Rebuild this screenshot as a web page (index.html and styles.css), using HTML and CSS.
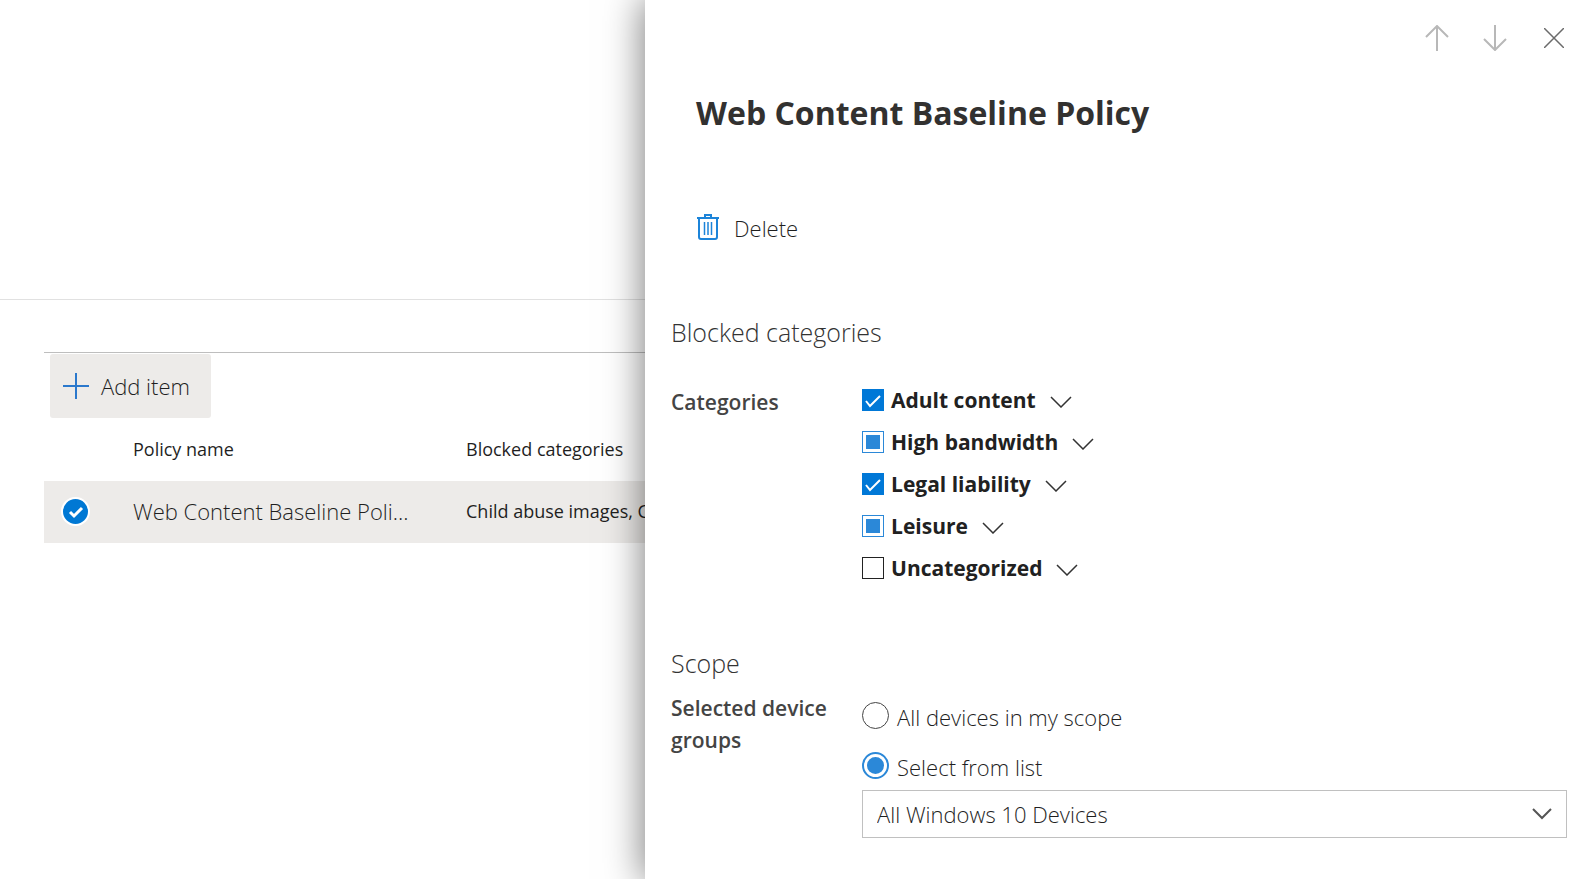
FILE: index.html
```html
<!DOCTYPE html>
<html lang="en">
<head>
    <meta charset="utf-8">
    <title>Web content filtering</title>
    <link rel="stylesheet" href="styles.css">
</head>
<body>
    <main class="page">
        <header class="page-header"></header>
        <section class="policies">
            <div class="toolbar">
                <button type="button" class="add-button">
                    <svg width="26" height="26" viewBox="0 0 26 26" fill="none" stroke="#2b78cc" stroke-width="2"><path d="M0 13h26M13 0v26"/></svg>
                    Add item
                </button>
            </div>
            <table class="policy-table">
                <colgroup>
                    <col class="col-check">
                    <col class="col-name">
                    <col>
                </colgroup>
                <thead>
                    <tr>
                        <td></td>
                        <th scope="col">Policy name</th>
                        <th scope="col">Blocked categories</th>
                    </tr>
                </thead>
                <tbody>
                    <tr class="selected">
                        <td><input type="checkbox" class="row-check" aria-label="Select policy" checked></td>
                        <td class="policy-name">Web Content Baseline Poli...</td>
                        <td>Child abuse images, Cults</td>
                    </tr>
                </tbody>
            </table>
        </section>
    </main>

    <aside class="panel">
        <div class="panel-nav">
            <button type="button" aria-label="Previous" class="nav-button">
                <svg width="26" height="26" viewBox="0 0 26 26" fill="none" stroke="#b8b8b8" stroke-width="2"><path d="M12 26V1M1 12L12 1l11 11"/></svg>
            </button>
            <button type="button" aria-label="Next" class="nav-button">
                <svg width="26" height="26" viewBox="0 0 26 26" fill="none" stroke="#b8b8b8" stroke-width="2"><path d="M12 0v25M1 14l11 11 11-11"/></svg>
            </button>
            <button type="button" aria-label="Close" class="nav-button">
                <svg width="20" height="20" viewBox="0 0 20 20" fill="none" stroke="#6b6b6b" stroke-width="1.5"><path d="M0 0l20 20M20 0L0 20"/></svg>
            </button>
        </div>

        <h1>Web Content Baseline Policy</h1>

        <button type="button" class="delete-button">
            <svg width="22" height="28" viewBox="0 0 22 28" fill="none" stroke="#1c84d9" stroke-width="2"><path d="M0 4h22M8 4V1h6v3M2 4v19q0 2 2 2h14q2 0 2-2V4"/><path d="M7.5 8v13M11 8v13M14.5 8v13" stroke-width="1.5"/></svg>
            Delete
        </button>

        <section class="group">
            <h2>Blocked categories</h2>
            <div class="field categories">
                <div class="field-label" id="categories-label">Categories</div>
                <ul class="category-list" aria-labelledby="categories-label">
                    <li>
                        <label><input type="checkbox" checked>Adult content</label>
                        <button type="button" class="expand" aria-label="Expand Adult content"><svg width="22" height="12" viewBox="0 0 22 12"><path d="M1 1l10 10L21 1"/></svg></button>
                    </li>
                    <li>
                        <label><input type="checkbox" class="partial">High bandwidth</label>
                        <button type="button" class="expand" aria-label="Expand High bandwidth"><svg width="22" height="12" viewBox="0 0 22 12"><path d="M1 1l10 10L21 1"/></svg></button>
                    </li>
                    <li>
                        <label><input type="checkbox" checked>Legal liability</label>
                        <button type="button" class="expand" aria-label="Expand Legal liability"><svg width="22" height="12" viewBox="0 0 22 12"><path d="M1 1l10 10L21 1"/></svg></button>
                    </li>
                    <li>
                        <label><input type="checkbox" class="partial">Leisure</label>
                        <button type="button" class="expand" aria-label="Expand Leisure"><svg width="22" height="12" viewBox="0 0 22 12"><path d="M1 1l10 10L21 1"/></svg></button>
                    </li>
                    <li>
                        <label><input type="checkbox">Uncategorized</label>
                        <button type="button" class="expand" aria-label="Expand Uncategorized"><svg width="22" height="12" viewBox="0 0 22 12"><path d="M1 1l10 10L21 1"/></svg></button>
                    </li>
                </ul>
            </div>
        </section>

        <section class="group">
            <h2>Scope</h2>
            <div class="field scope">
                <div class="field-label" id="groups-label">Selected device groups</div>
                <div class="scope-options" role="group" aria-labelledby="groups-label">
                    <label><input type="radio" name="scope"><span>All devices in my scope</span></label>
                    <label><input type="radio" name="scope" checked><span>Select from list</span></label>
                    <select aria-labelledby="groups-label">
                        <option>All Windows 10 Devices</option>
                    </select>
                </div>
            </div>
        </section>
    </aside>

    <script>
        document.querySelectorAll(".partial").forEach(function(box) {
            box.indeterminate = true;
        });
    </script>
</body>
</html>
```

FILE: styles.css
```css
* {
    box-sizing: border-box;
}
body {
    margin: 0;
    min-height: 100vh;
    position: relative;
    overflow: hidden;
    background-color: #fff;
    color: #1f1f1f;
    font-family: "Segoe UI", "Open Sans", "Noto Sans", sans-serif;
    font-size: 22px;
    font-weight: 300;
}
button {
    border: none;
    background: none;
    color: inherit;
    font: inherit;
    cursor: pointer;
}
input {
    appearance: none;
    margin: 0;
    flex-shrink: 0;
}
.page-header {
    height: 300px;
    border-bottom: 1px solid #e1e1e1;
}
.policies {
    margin: 52px 0 0 44px;
    border-top: 1px solid #bebebe;
}
.toolbar {
    padding: 1px 6px 0;
}
.add-button {
    display: flex;
    align-items: center;
    gap: 12px;
    height: 64px;
    padding: 0 21px 0 13px;
    border-radius: 3px;
    background-color: #edebe9;
}
.policy-table {
    width: 100%;
    table-layout: fixed;
    border-collapse: collapse;
    font-size: 18px;
}
.col-check {
    width: 89px;
}
.col-name {
    width: 333px;
}
.policy-table th,
.policy-table td {
    height: 62px;
    padding: 0 0 2px;
    text-align: left;
    font-weight: 400;
}
.policy-table th {
    height: 63px;
}
.policy-table .policy-name {
    font-size: 22px;
    font-weight: 300;
}
.selected {
    background-color: #edebe9;
}
.row-check {
    display: block;
    width: 29px;
    height: 29px;
    margin-left: 17px;
    border: 2px solid #fff;
    border-radius: 50%;
    background: #0078d4 url("data:image/svg+xml,%3Csvg xmlns='http://www.w3.org/2000/svg' viewBox='0 0 25 25'%3E%3Cpath d='M7 13l4 4 8-8' fill='none' stroke='white' stroke-width='3'/%3E%3C/svg%3E") center / 25px no-repeat;
}
.panel {
    position: absolute;
    top: 0;
    right: 0;
    bottom: 0;
    width: 59.15%;
    padding: 13px 0 0 26px;
    background-color: #fff;
    box-shadow: 0 0 36px 2px rgba(0, 0, 0, 0.5);
}
.panel-nav {
    display: flex;
    justify-content: flex-end;
    gap: 8px;
}
.nav-button {
    display: flex;
    align-items: center;
    justify-content: center;
    width: 50px;
    height: 50px;
    padding: 0;
}
h1 {
    margin: 26px 0 0 25px;
    color: #323130;
    font-size: 32px;
    font-weight: 700;
    line-height: 48px;
}
.delete-button {
    display: flex;
    align-items: center;
    gap: 15px;
    height: 50px;
    margin: 66px 0 0 26px;
    padding: 0;
}
.group {
    margin-top: 59px;
    padding-right: 12px;
}
.group + .group {
    margin-top: 54px;
}
h2 {
    margin: 0;
    color: #333;
    font-size: 25px;
    font-weight: 300;
    line-height: 40px;
}
.field {
    display: flex;
}
.categories {
    margin-top: 27px;
}
.scope {
    margin-top: 7px;
}
.field-label {
    width: 191px;
    padding: 2px 20px 0 0;
    color: #444;
    font-size: 21px;
    font-weight: 600;
    line-height: 32px;
}
.categories .field-label {
    line-height: 42px;
}
.category-list {
    margin: 0;
    padding: 0;
    list-style: none;
    color: #212121;
    font-size: 21px;
    font-weight: 700;
}
.category-list li,
.category-list label {
    display: flex;
    align-items: center;
    height: 42px;
    gap: 7px;
}
.category-list li {
    gap: 14px;
}
.category-list input {
    width: 22px;
    height: 22px;
    border: 1px solid #222;
}
.category-list input:checked {
    border-color: #0078d7;
    background: #0078d7 url("data:image/svg+xml,%3Csvg xmlns='http://www.w3.org/2000/svg' viewBox='0 0 22 22'%3E%3Cpath d='M4 12l4 5L18 7' fill='none' stroke='white' stroke-width='2'/%3E%3C/svg%3E") center / 22px no-repeat;
}
.category-list input:indeterminate {
    padding: 3px;
    border-color: #2b88d8;
    background: #2b88d8 content-box;
}
.expand {
    display: flex;
    padding: 4px 0 0;
}
.expand svg {
    fill: none;
    stroke: #333;
    stroke-width: 1.5;
}
.scope-options {
    flex: 1;
}
.scope-options label {
    display: flex;
    align-items: center;
    gap: 8px;
    height: 50px;
}
.scope-options input {
    width: 27px;
    height: 27px;
    border: 1px solid #444;
    border-radius: 50%;
}
.scope-options input:checked {
    padding: 3px;
    border: 2px solid #2b88d8;
    background: #2b88d8 content-box;
}
.scope-options span {
    padding-top: 4px;
}
select {
    display: block;
    appearance: none;
    width: 100%;
    height: 48px;
    padding: 0 48px 0 14px;
    border: 1px solid #c0c0c0;
    border-radius: 0;
    background: #fff url("data:image/svg+xml,%3Csvg xmlns='http://www.w3.org/2000/svg' width='20' height='12' viewBox='0 0 20 12'%3E%3Cpath d='M1 1l9 9 9-9' fill='none' stroke='%23555' stroke-width='2'/%3E%3C/svg%3E") right 14px center no-repeat;
    color: inherit;
    font: inherit;
}
```
